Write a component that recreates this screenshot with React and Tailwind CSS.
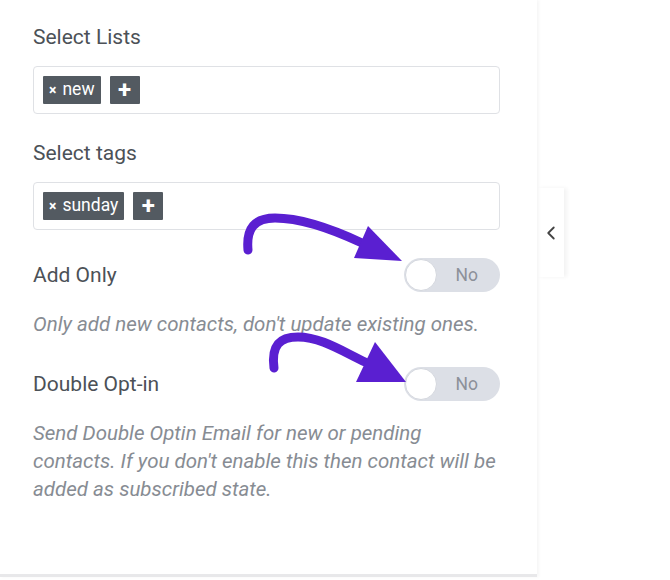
import React, { useState } from 'react';
import { ChevronLeft } from 'lucide-react';

const font = { fontFamily: 'Roboto, "Noto Sans", sans-serif' };

function Tag({ label }) {
  return (
    <span className="flex items-center h-[28px] px-[6px] bg-[#535a61] text-white text-[17.5px] leading-none rounded-[1px]">
      <span className="text-[14px] font-bold mr-[6px]">×</span>
      {label}
    </span>
  );
}

function TagInput({ tags }) {
  return (
    <div className="flex items-center gap-[9px] h-[48px] px-[9px] border border-[#dfe1e5] rounded-[4px] bg-white">
      {tags.map(t => <Tag key={t} label={t} />)}
      <button className="flex items-center justify-center w-[30px] h-[28px] bg-[#535a61] text-white text-[24px] font-bold leading-none rounded-[1px]">+</button>
    </div>
  );
}

function Toggle({ on, onClick }) {
  return (
    <button onClick={onClick} className="relative flex items-center w-[96px] h-[34px] rounded-full bg-[#dcdfe6] p-[1px]">
      <span className="w-[32px] h-[32px] rounded-full bg-white border border-[#d4d7de]" />
      <span className="ml-auto mr-[21px] text-[17.5px] text-[#8c9099]">{on ? 'Yes' : 'No'}</span>
    </button>
  );
}

export default function App() {
  const [addOnly, setAddOnly] = useState(false);
  const [doubleOpt, setDoubleOpt] = useState(false);

  return (
    <div className="flex items-start w-[670px] h-[580px] bg-white overflow-hidden" style={font}>
      <div className="relative w-[537px] h-[577px] shrink-0 bg-white border-b-[3px] border-[#e8e8ea] shadow-[2px_0_3px_rgba(0,0,0,0.04)] pl-[33px] pr-[37px] pt-[23px]">
        <div className="text-[21px] leading-[28px] text-[#4c5157] mb-[15px]">Select Lists</div>
        <TagInput tags={['new']} />

        <div className="text-[21px] leading-[28px] text-[#4c5157] mt-[25px] mb-[15px]">Select tags</div>
        <TagInput tags={['sunday']} />

        <div className="flex items-center justify-between mt-[28px]">
          <span className="text-[21px] leading-[28px] text-[#4c5157]">Add Only</span>
          <Toggle on={addOnly} onClick={() => setAddOnly(!addOnly)} />
        </div>
        <p className="mt-[18px] text-[20.5px] leading-[28px] italic text-[#878c93]">Only add new contacts, don't update existing ones.</p>

        <div className="flex items-center justify-between mt-[29px]">
          <span className="text-[21px] leading-[28px] text-[#4c5157]">Double Opt-in</span>
          <Toggle on={doubleOpt} onClick={() => setDoubleOpt(!doubleOpt)} />
        </div>
        <p className="mt-[18px] text-[20.5px] leading-[28px] italic text-[#878c93]">
          Send Double Optin Email for new or pending contacts. If you don't enable this then contact will be added as subscribed state.
        </p>

        {/* annotation arrows */}
        <svg className="absolute left-0 top-0 pointer-events-none" width="537" height="574" viewBox="0 0 537 574">
          <path d="M248,250 C246,228 255,218 275,218 C300,218 330,228 362,243" fill="none" stroke="#5a1fd1" strokeWidth="9" strokeLinecap="round" />
          <polygon points="368,226 402,261 354,258" fill="#5a1fd1" />
          <path d="M274,368 C271,345 280,337 298,337 C320,337 340,350 365,362" fill="none" stroke="#5a1fd1" strokeWidth="9" strokeLinecap="round" />
          <polygon points="375,342 406,382 356,382" fill="#5a1fd1" />
        </svg>
      </div>

      <button className="mt-[188px] w-[27px] h-[89px] flex items-center justify-center bg-white shadow-[3px_0_4px_rgba(0,0,0,0.05)] text-[#444]">
        <ChevronLeft size={22} strokeWidth={2} />
      </button>
    </div>
  );
}
